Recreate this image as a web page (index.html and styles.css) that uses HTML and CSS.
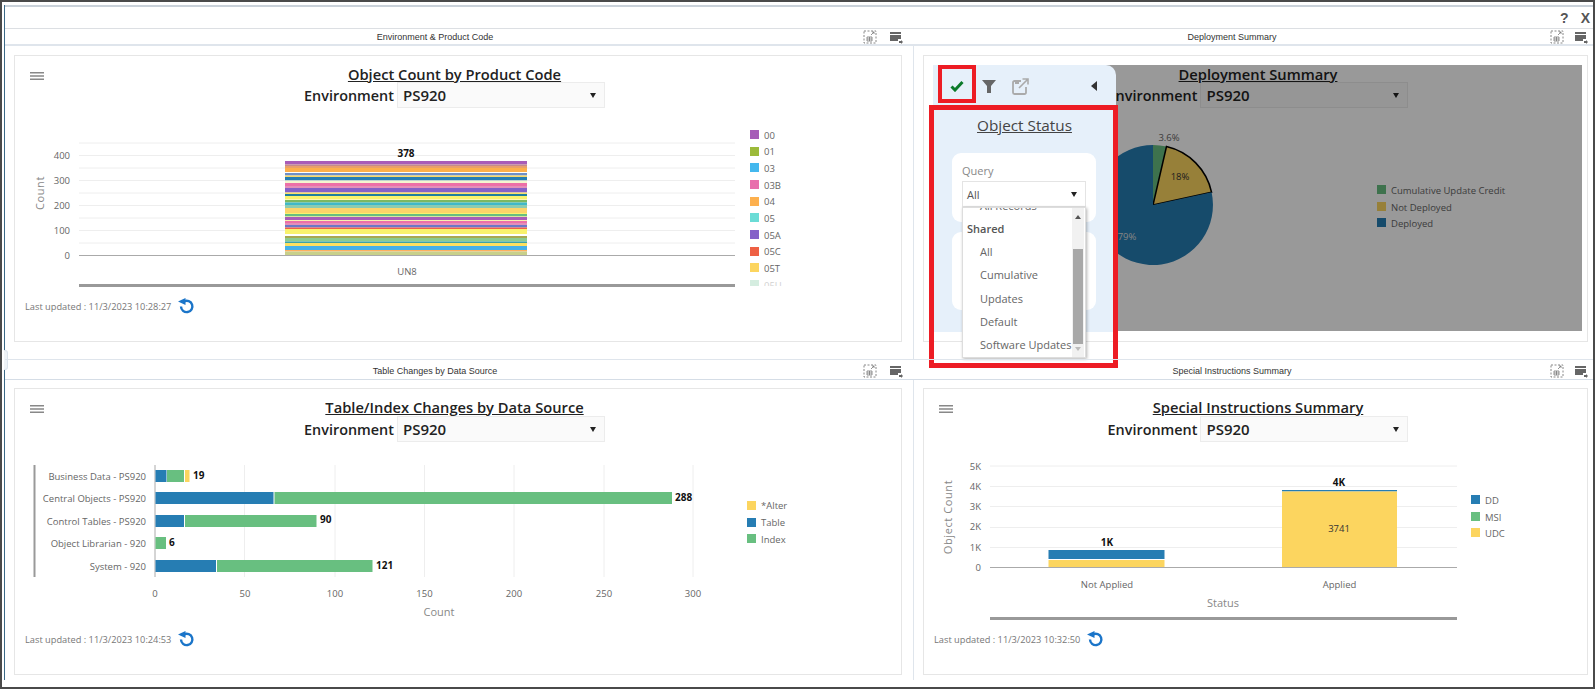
FILE: index.html
```html
<!DOCTYPE html>
<html lang="en">
<head>
<meta charset="utf-8">
<title>Dashboard</title>
<link rel="stylesheet" href="styles.css">
</head>
<body>
<div class="frame">
  <div class="inner">
    <div class="topbar"><span class="help">?</span><span class="close">X</span></div>
    <div class="splitter"></div>
    <div class="panels">

      <section class="panel panel-top col-left">
        <header class="panel-head">
          <span class="panel-name">Environment &amp; Product Code</span>
          <svg class="ic-a" width="14" height="14" viewBox="0 0 14 14"><path class="dash" d="M1 1h12v12H1z"/><path class="gridi" d="M4 7h5v4H4zM6.500 7v4M4 9h5"/><path class="gridi" d="M8 5l3-3M9 2h2v2"/></svg>
          <svg class="ic-b" width="13" height="12" viewBox="0 0 13 12"><path class="solid" d="M0 0h11v2H0zM0 3h11v4H8v2H0z"/><path class="solid" d="M9 9h2V8l2 2-2 2v-1H9z"/></svg>
        </header>
        <div class="panel-body body-left">
          <div class="card">
            <svg class="burger" width="14" height="8" viewBox="0 0 14 8"><path d="M0 0h14v1.500H0zM0 3.200h14v1.500H0zM0 6.500h14V8H0z"/></svg>
            <h2 class="title shift-left">Object Count by Product Code</h2>
            <div class="envrow shift-left"><span class="envlabel">Environment</span><div class="envsel"><span>PS920</span><i class="caret"></i></div></div>
            <svg class="chart" width="886" height="186" viewBox="15 112 886 186">
              <defs><clipPath id="legclip"><rect x="740" y="125" width="60" height="161"/></clipPath></defs>
              <g class="gl"><path d="M79 143H735M79 155.500H735M79 168H735M79 180.500H735M79 193H735M79 205.500H735M79 218H735M79 230.500H735M79 243H735"/></g>
              <text class="t end" x="70" y="159">400</text><text class="t end" x="70" y="184">300</text><text class="t end" x="70" y="209">200</text><text class="t end" x="70" y="234">100</text><text class="t end" x="70" y="259">0</text>
              <text class="axt mid" transform="translate(44 193) rotate(-90)">Count</text>
              <g>
                <rect x="285" y="161" width="242" height="3.500" fill="#a85cb8"/><rect x="285" y="164.500" width="242" height="1.500" fill="#c58a8a"/><rect x="285" y="166" width="242" height="2" fill="#e8a06a"/><rect x="285" y="168" width="242" height="4" fill="#fdaf4b"/><rect x="285" y="173" width="242" height="2.500" fill="#6f8fc8"/><rect x="285" y="175.500" width="242" height="1.500" fill="#f8d86a"/><rect x="285" y="177" width="242" height="3.500" fill="#267db3"/><rect x="285" y="180.500" width="242" height="2.500" fill="#f5f5d0"/><rect x="285" y="183" width="242" height="3" fill="#ed6fa8"/><rect x="285" y="186" width="242" height="2" fill="#e48fb8"/><rect x="285" y="188" width="242" height="4.500" fill="#8561c8"/><rect x="285" y="192.500" width="242" height="1.500" fill="#f9e06a"/><rect x="285" y="194" width="242" height="2" fill="#1d7f9f"/><rect x="285" y="196" width="242" height="3.500" fill="#f9f26d"/><rect x="285" y="200" width="242" height="2.500" fill="#7cb860"/><rect x="285" y="202.500" width="242" height="2.500" fill="#3fb8c8"/><rect x="285" y="205" width="242" height="3" fill="#8ccbb0"/><rect x="285" y="208" width="242" height="5" fill="#fcd46a"/><rect x="285" y="213" width="242" height="1" fill="#f9f26d"/><rect x="285" y="214" width="242" height="2.500" fill="#68bf80"/><rect x="285" y="216.500" width="242" height=".5" fill="#f8f080"/><rect x="285" y="217" width="242" height="3" fill="#a85cb8"/><rect x="285" y="220" width="242" height="1" fill="#f8f0b0"/><rect x="285" y="221" width="242" height="2" fill="#ed6fa8"/><rect x="285" y="223" width="242" height="2" fill="#e48fb8"/><rect x="285" y="225" width="242" height="2.500" fill="#6a78c8"/><rect x="285" y="227.500" width="242" height="1.500" fill="#f0604a"/><rect x="285" y="229" width="242" height="5" fill="#f9f26d"/><rect x="285" y="236" width="242" height="2" fill="#a8a850"/><rect x="285" y="238" width="242" height="3.500" fill="#8ccb90"/><rect x="285" y="241.500" width="242" height="1.500" fill="#3aa3a8"/><rect x="285" y="243" width="242" height="3" fill="#fde060"/><rect x="285" y="246" width="242" height="4" fill="#45b0e8"/><rect x="285" y="250" width="242" height="1.500" fill="#fdb060"/><rect x="285" y="251.500" width="242" height="3.500" fill="#c8d08a"/>
              </g>
              <path class="axis" d="M79 255.500H735"/>
              <rect class="thick" x="79" y="284" width="656" height="3"/>
              <text class="v mid" x="406" y="157">378</text>
              <text class="t mid" x="407" y="275">UN8</text>
              <g clip-path="url(#legclip)">
                <rect x="750" y="130" width="9" height="9" fill="#a65cb7"/><text class="t" x="764" y="139">00</text>
                <rect x="750" y="147" width="9" height="9" fill="#9cba3a"/><text class="t" x="764" y="155">01</text>
                <rect x="750" y="163" width="9" height="9" fill="#44b8ee"/><text class="t" x="764" y="172">03</text>
                <rect x="750" y="180" width="9" height="9" fill="#e86fac"/><text class="t" x="764" y="189">03B</text>
                <rect x="750" y="197" width="9" height="9" fill="#fdb04e"/><text class="t" x="764" y="205">04</text>
                <rect x="750" y="213" width="9" height="9" fill="#6bdcd6"/><text class="t" x="764" y="222">05</text>
                <rect x="750" y="230" width="9" height="9" fill="#8561c8"/><text class="t" x="764" y="239">05A</text>
                <rect x="750" y="247" width="9" height="9" fill="#ee6044"/><text class="t" x="764" y="255">05C</text>
                <rect x="750" y="263" width="9" height="9" fill="#fcd55f"/><text class="t" x="764" y="272">05T</text>
                <rect x="750" y="280" width="9" height="9" fill="#d5ede0"/><text class="t faint" x="764" y="289">05U</text>
              </g>
            </svg>
            <div class="updated"><span>Last updated : 11/3/2023 10:28:27</span><svg class="refresh" width="18" height="16" viewBox="0 0 18 16"><path d="M7 3.400A5.700 5.700 0 1 1 4 8.500"/><path class="head" d="M8.500 0v7L1 3.500z"/></svg></div>
          </div>
        </div>
      </section>

      <section class="panel panel-top col-right">
        <header class="panel-head">
          <span class="panel-name">Deployment Summary</span>
          <svg class="ic-a" width="14" height="14" viewBox="0 0 14 14"><path class="dash" d="M1 1h12v12H1z"/><path class="gridi" d="M4 7h5v4H4zM6.500 7v4M4 9h5"/><path class="gridi" d="M8 5l3-3M9 2h2v2"/></svg>
          <svg class="ic-b" width="13" height="12" viewBox="0 0 13 12"><path class="solid" d="M0 0h11v2H0zM0 3h11v4H8v2H0z"/><path class="solid" d="M9 9h2V8l2 2-2 2v-1H9z"/></svg>
        </header>
        <div class="panel-body body-right">
          <div class="card">
            <h2 class="title shift-right">Deployment Summary</h2>
            <div class="envrow shift-right"><span class="envlabel">Environment</span><div class="envsel"><span>PS920</span><i class="caret"></i></div></div>
            <svg class="chart" width="663" height="186" viewBox="924 112 663 186">
              <path d="M1153 205V145A60 60 0 0 1 1166.500 146.500Z" fill="#68bf80"/>
              <path d="M1153 205L1166.500 146.500A60 60 0 0 1 1211.600 192.300Z" fill="#fcd55f" stroke="#000" stroke-width="1.500"/>
              <path d="M1153 205L1211.600 192.300A60 60 0 1 1 1153 145Z" fill="#267db3"/>
              <text class="t mid" x="1169" y="141">3.6%</text>
              <text class="t mid dark" x="1180" y="180">18%</text>
              <text class="t mid lite" x="1127" y="240">79%</text>
              <rect x="1377" y="185" width="9" height="9" fill="#68bf80"/><text class="t" x="1391" y="194">Cumulative Update Credit</text>
              <rect x="1377" y="202" width="9" height="9" fill="#fcd55f"/><text class="t" x="1391" y="211">Not Deployed</text>
              <rect x="1377" y="218" width="9" height="9" fill="#267db3"/><text class="t" x="1391" y="227">Deployed</text>
            </svg>
            <div class="overlay"></div>
            <aside class="popup">
              <div class="pop-tools">
                <svg class="ic-check" width="14" height="12" viewBox="0 0 14 12"><path d="M1.500 6.500L5 10 12.500 2"/></svg>
                <svg class="ic-filter" width="14" height="13" viewBox="0 0 14 13"><path d="M0 0h14L9 6v7H5V6z"/></svg>
                <svg class="ic-ext" width="17" height="17" viewBox="0 0 17 17"><path class="ext-box" d="M9 3H2.500A1.500 1.500 0 0 0 1 4.500v10A1.500 1.500 0 0 0 2.500 16h10a1.500 1.500 0 0 0 1.500-1.500V9"/><path class="ext-arrow" d="M7 10L15.500 1.500M10.500 1H16v5.500"/><path class="ext-fill" d="M3 4h4v2H3z"/></svg>
                <i class="collapse"></i>
              </div>
              <h3 class="pop-title">Object Status</h3>
              <div class="pop-card pop-card-a">
                <div class="pop-label">Query</div>
                <div class="pop-select"><span>All</span><i class="caret"></i></div>
              </div>
              <div class="pop-card pop-card-b"></div>
              <div class="dropdown">
                <ul class="dd-list">
                  <li class="dd-item">All Records</li>
                  <li class="dd-group">Shared</li>
                  <li class="dd-item">All</li>
                  <li class="dd-item">Cumulative</li>
                  <li class="dd-item">Updates</li>
                  <li class="dd-item">Default</li>
                  <li class="dd-item">Software Updates</li>
                </ul>
                <div class="scroll"><i class="up"></i><b class="thumb"></b><i class="down"></i></div>
              </div>
            </aside>
            <div class="mark mark-check"></div>
            <div class="mark mark-drop"></div>
          </div>
        </div>
      </section>

      <section class="panel panel-low col-left">
        <header class="panel-head">
          <span class="panel-name">Table Changes by Data Source</span>
          <svg class="ic-a" width="14" height="14" viewBox="0 0 14 14"><path class="dash" d="M1 1h12v12H1z"/><path class="gridi" d="M4 7h5v4H4zM6.500 7v4M4 9h5"/><path class="gridi" d="M8 5l3-3M9 2h2v2"/></svg>
          <svg class="ic-b" width="13" height="12" viewBox="0 0 13 12"><path class="solid" d="M0 0h11v2H0zM0 3h11v4H8v2H0z"/><path class="solid" d="M9 9h2V8l2 2-2 2v-1H9z"/></svg>
        </header>
        <div class="panel-body body-left">
          <div class="card">
            <svg class="burger" width="14" height="8" viewBox="0 0 14 8"><path d="M0 0h14v1.500H0zM0 3.200h14v1.500H0zM0 6.500h14V8H0z"/></svg>
            <h2 class="title shift-left">Table/Index Changes by Data Source</h2>
            <div class="envrow shift-left"><span class="envlabel">Environment</span><div class="envsel"><span>PS920</span><i class="caret"></i></div></div>
            <svg class="chart" width="886" height="185" viewBox="15 446 886 185">
              <g class="gl"><path d="M244.500 465V577M335 465V577M424.500 465V577M514 465V577M604 465V577M693 465V577"/></g>
              <rect class="thick" x="33.500" y="465" width="2" height="112"/>
              <path class="axis" d="M155 465V577"/>
              <text class="t end" x="146" y="480">Business Data - PS920</text>
              <text class="t end" x="146" y="502">Central Objects - PS920</text>
              <text class="t end" x="146" y="525">Control Tables - PS920</text>
              <text class="t end" x="146" y="547">Object Librarian - 920</text>
              <text class="t end" x="146" y="570">System - 920</text>
              <rect x="155.500" y="470" width="11" height="12" fill="#267db3"/><rect x="167" y="470" width="17" height="12" fill="#68bf80"/><rect x="185" y="470" width="4.500" height="12" fill="#fcd55f"/>
              <rect x="155.500" y="492" width="118" height="12" fill="#267db3"/><rect x="274.500" y="492" width="397.500" height="12" fill="#68bf80"/>
              <rect x="155.500" y="515" width="28.500" height="12" fill="#267db3"/><rect x="185" y="515" width="131.500" height="12" fill="#68bf80"/>
              <rect x="155.500" y="537" width="10.500" height="12" fill="#68bf80"/>
              <rect x="155.500" y="560" width="60.500" height="12" fill="#267db3"/><rect x="217" y="560" width="155.500" height="12" fill="#68bf80"/>
              <text class="v" x="193" y="479">19</text><text class="v" x="675" y="501">288</text><text class="v" x="320" y="523">90</text><text class="v" x="169" y="546">6</text><text class="v" x="376" y="569">121</text>
              <text class="t mid" x="155" y="597">0</text><text class="t mid" x="245" y="597">50</text><text class="t mid" x="335" y="597">100</text><text class="t mid" x="424.500" y="597">150</text><text class="t mid" x="514" y="597">200</text><text class="t mid" x="604" y="597">250</text><text class="t mid" x="693" y="597">300</text>
              <text class="axt2 mid" x="439" y="616">Count</text>
              <rect x="747" y="501" width="9" height="9" fill="#fcd55f"/><text class="t" x="761" y="509">*Alter</text>
              <rect x="747" y="518" width="9" height="9" fill="#267db3"/><text class="t" x="761" y="526">Table</text>
              <rect x="747" y="534" width="9" height="9" fill="#68bf80"/><text class="t" x="761" y="543">Index</text>
            </svg>
            <div class="updated"><span>Last updated : 11/3/2023 10:24:53</span><svg class="refresh" width="18" height="16" viewBox="0 0 18 16"><path d="M7 3.400A5.700 5.700 0 1 1 4 8.500"/><path class="head" d="M8.500 0v7L1 3.500z"/></svg></div>
          </div>
        </div>
      </section>

      <section class="panel panel-low col-right">
        <header class="panel-head">
          <span class="panel-name">Special Instructions Summary</span>
          <svg class="ic-a" width="14" height="14" viewBox="0 0 14 14"><path class="dash" d="M1 1h12v12H1z"/><path class="gridi" d="M4 7h5v4H4zM6.500 7v4M4 9h5"/><path class="gridi" d="M8 5l3-3M9 2h2v2"/></svg>
          <svg class="ic-b" width="13" height="12" viewBox="0 0 13 12"><path class="solid" d="M0 0h11v2H0zM0 3h11v4H8v2H0z"/><path class="solid" d="M9 9h2V8l2 2-2 2v-1H9z"/></svg>
        </header>
        <div class="panel-body body-right">
          <div class="card">
            <svg class="burger" width="14" height="8" viewBox="0 0 14 8"><path d="M0 0h14v1.500H0zM0 3.200h14v1.500H0zM0 6.500h14V8H0z"/></svg>
            <h2 class="title shift-right">Special Instructions Summary</h2>
            <div class="envrow shift-right"><span class="envlabel">Environment</span><div class="envsel"><span>PS920</span><i class="caret"></i></div></div>
            <svg class="chart" width="663" height="185" viewBox="924 446 663 185">
              <g class="gl"><path d="M990 466H1457M990 486.500H1457M990 506.500H1457M990 527.500H1457M990 547.500H1457"/></g>
              <text class="t end" x="981" y="470">5K</text><text class="t end" x="981" y="490">4K</text><text class="t end" x="981" y="510">3K</text><text class="t end" x="981" y="530">2K</text><text class="t end" x="981" y="551">1K</text><text class="t end" x="981" y="571">0</text>
              <text class="axt mid" transform="translate(952 517) rotate(-90)">Object Count</text>
              <rect x="1048.500" y="550" width="116" height="9" fill="#267db3"/><rect x="1048.500" y="560" width="116" height="7" fill="#fcd55f"/>
              <rect x="1282" y="490" width="115" height="1.500" fill="#267db3"/><rect x="1282" y="491.500" width="115" height="75.500" fill="#fcd55f"/>
              <path class="axis" d="M990 567.500H1457"/>
              <text class="v mid" x="1107" y="546">1K</text><text class="v mid" x="1339" y="486">4K</text>
              <text class="t mid dark" x="1339" y="532">3741</text>
              <text class="t mid" x="1107" y="588">Not Applied</text><text class="t mid" x="1339.500" y="588">Applied</text>
              <text class="axt2 mid" x="1223" y="607">Status</text>
              <rect class="thick" x="990" y="617" width="467" height="3"/>
              <rect x="1471" y="495" width="9" height="9" fill="#267db3"/><text class="t" x="1485" y="504">DD</text>
              <rect x="1471" y="512" width="9" height="9" fill="#68bf80"/><text class="t" x="1485" y="521">MSI</text>
              <rect x="1471" y="528" width="9" height="9" fill="#fcd55f"/><text class="t" x="1485" y="537">UDC</text>
            </svg>
            <div class="updated"><span>Last updated : 11/3/2023 10:32:50</span><svg class="refresh" width="18" height="16" viewBox="0 0 18 16"><path d="M7 3.400A5.700 5.700 0 1 1 4 8.500"/><path class="head" d="M8.500 0v7L1 3.500z"/></svg></div>
          </div>
        </div>
      </section>

    </div>
  </div>
</div>
</body>
</html>
```
FILE: styles.css
```css
* { box-sizing: border-box; }
html, body { margin: 0; padding: 0; background: #fff; overflow: hidden; }
body { font-family: "Open Sans", "Liberation Sans", sans-serif; }

.frame {
  width: 1595px;
  height: 689px;
  border: 2px solid #4a4a4a;
  padding: 3px 0 7px 2px;
  background: #fff;
}
.inner {
  position: relative;
  height: 100%;
  display: flex;
  flex-direction: column;
  border-left: 1px solid #3c6a88;
}
.topbar {
  height: 24px;
  flex: none;
  border-top: 2px solid #c9d1d9;
  border-bottom: 1px solid #dcdfe3;
  display: flex;
  justify-content: flex-end;
  align-items: center;
  gap: 12px;
  padding-right: 3px;
  font-family: "Liberation Sans", sans-serif;
  font-weight: 700;
  font-size: 14px;
  color: #555;
}
.splitter {
  position: absolute;
  left: -1px;
  top: 345px;
  width: 4px;
  height: 20px;
  background: #eef2f6;
  border: 1px solid #dbe3ec;
  border-left: 0;
  border-radius: 0 3px 3px 0;
}
.panels {
  flex: 1;
  display: grid;
  grid-template-columns: 908px 680px;
  grid-template-rows: 330px 1fr;
}
.panel { display: flex; flex-direction: column; min-height: 0; }
.panel-head {
  position: relative;
  flex: none;
  display: flex;
  align-items: center;
  justify-content: center;
}
.panel-top .panel-head { height: 17px; border-bottom: 2px solid #dfe5ec; }
.panel-low .panel-head { height: 21px; border-top: 1px solid #dfe5ec; border-bottom: 1px solid #d5dde6; padding-top: 3px; }
.col-left .panel-head { padding-right: 48px; }
.col-right .panel-head { padding-right: 42px; }
.panel-name {
  font-family: "Liberation Sans", sans-serif;
  font-size: 9px;
  color: #333;
}
.ic-a, .ic-b { position: absolute; }
.ic-a { top: 1px; }
.ic-b { top: 3px; }
.panel-low .ic-a { top: 4px; }
.panel-low .ic-b { top: 6px; }
.col-left .ic-a { right: 36px; }
.col-left .ic-b { right: 10px; }
.col-right .ic-a { right: 29px; }
.col-right .ic-b { right: 5px; }
.dash { fill: none; stroke: #888; stroke-width: 1; stroke-dasharray: 2 1.500; }
.gridi { fill: none; stroke: #777; stroke-width: .8; }
.solid { fill: #666; }

.panel-body { flex: 1; display: flex; min-height: 0; }
.panel-top .panel-body { padding-top: 9px; padding-bottom: 17px; }
.panel-low .panel-body { padding-top: 8px; padding-bottom: 5px; }
.body-left { padding-left: 9px; padding-right: 11px; }
.body-right { padding-left: 9px; padding-right: 5px; border-left: 1px solid #dfe5ec; }

.card {
  position: relative;
  flex: 1;
  min-width: 0;
  border: 1px solid #e6e6e6;
  background: #fff;
  padding-top: 10px;
}

.burger { position: absolute; left: 15px; top: 16px; fill: #888; }
.title {
  position: relative;
  margin: 0;
  font-size: 14.700px;
  line-height: 16px;
  font-weight: 600;
  color: #222;
  text-align: center;
  text-decoration: underline;
}
.envrow {
  margin-top: 1px;
  height: 26px;
  margin-bottom: 4px;
  display: flex;
  justify-content: center;
  align-items: center;
  gap: 3px;
}
.panel-top .envrow { margin-top: 0; }
.shift-left { padding-right: 7px; }
.shift-right { padding-left: 5px; }
.envlabel { font-size: 14.400px; font-weight: 600; color: #222; }
.envsel {
  width: 208px;
  height: 26px;
  display: flex;
  align-items: center;
  justify-content: space-between;
  padding: 0 8px 0 5px;
  background: #fafafa;
  border: 1px solid #ececec;
  font-size: 15px;
  font-weight: 600;
  color: #222;
}
.caret {
  width: 0;
  height: 0;
  border: solid transparent;
  border-width: 5px 3.500px 0;
  border-top-color: #222;
}
.chart { display: block; }
.chart text { font-family: "Open Sans", "Liberation Sans", sans-serif; }
.t { font-size: 9.500px; fill: #666; }
.end { text-anchor: end; }
.mid { text-anchor: middle; }
.v { font-size: 10px; font-weight: 700; fill: #111; }
.axt { font-size: 11px; fill: #888; letter-spacing: .6px; }
.axt2 { font-size: 11px; fill: #888; }
.faint { opacity: .3; }
.dark { fill: #333; }
.lite { fill: #ddd; }
.gl path { fill: none; stroke: #eeeeee; stroke-width: 1; }
.axis { fill: none; stroke: #aaa; stroke-width: 1; }
.thick { fill: #999; }

.updated {
  height: 16px;
  display: flex;
  align-items: center;
  gap: 6px;
  padding-left: 10px;
  font-size: 9.250px;
  color: #777;
}
.refresh { fill: none; }
.refresh path { stroke: #1b75c9; stroke-width: 2.400; fill: none; }
.refresh .head { fill: #1b75c9; stroke: none; }

.overlay {
  position: absolute;
  left: 9px;
  top: 9px;
  right: 5px;
  bottom: 10px;
  background: rgba(0, 0, 0, .4);
}
.popup {
  position: absolute;
  left: 9px;
  top: 9px;
  width: 183px;
  height: 267px;
  background: #e6f0fa;
  border-radius: 0 10px 4px 0;
}
.pop-tools {
  height: 40px;
  display: flex;
  align-items: center;
  padding: 2px 19px 0 17px;
}
.ic-check path { fill: none; stroke: #0b7a2a; stroke-width: 3; }
.ic-filter { margin-left: 18px; fill: #666; }
.ic-ext { margin-left: 16px; }
.ext-box { fill: none; stroke: #aaa; stroke-width: 1.800; }
.ext-arrow { fill: none; stroke: #aaa; stroke-width: 1.600; }
.ext-fill { fill: #aaa; }
.collapse {
  margin-left: auto;
  width: 0;
  height: 0;
  border: solid transparent;
  border-width: 5px 6px 5px 0;
  border-right-color: #333;
}
.pop-title {
  margin: 8px 0 0;
  font-size: 15.300px;
  line-height: 24px;
  font-weight: 400;
  color: #444;
  text-align: center;
  text-decoration: underline;
}
.pop-card {
  margin-left: 19px;
  width: 144px;
  background: #fff;
  border-radius: 9px;
}
.pop-card-a { margin-top: 16px; height: 69px; padding: 10px 10px 0; }
.pop-card-b { margin-top: 10px; height: 78px; }
.pop-label { font-size: 11px; line-height: 16px; color: #888; }
.pop-select {
  margin-top: 2px;
  height: 26px;
  display: flex;
  align-items: center;
  justify-content: space-between;
  padding: 0 8px 0 4px;
  background: #fff;
  border: 1px solid #e4e4e4;
  font-size: 11px;
  color: #555;
}
.dropdown {
  position: absolute;
  left: 29px;
  top: 142px;
  width: 124px;
  height: 151px;
  background: #fff;
  border: 1px solid #ddd;
  box-shadow: 1px 1px 3px rgba(0, 0, 0, .3);
  overflow: hidden;
}
.dd-list {
  list-style: none;
  margin: -14.500px 0 0;
  padding: 0;
  font-size: 11px;
  color: #666;
}
.dd-item { height: 23.300px; line-height: 23.300px; padding-left: 17px; white-space: nowrap; }
.dd-group { height: 23.300px; line-height: 23.300px; padding-left: 4px; font-weight: 600; color: #555; }
.scroll {
  position: absolute;
  right: 1px;
  top: 0;
  bottom: 0;
  width: 12px;
  background: #f1f1f1;
}
.thumb {
  position: absolute;
  left: 1px;
  right: 1px;
  top: 41px;
  height: 95px;
  background: #a8a8a8;
}
.up, .down {
  position: absolute;
  left: 3px;
  width: 0;
  height: 0;
  border: solid transparent;
  border-width: 0 3px 4px;
}
.up { top: 7px; border-bottom-color: #555; }
.down { bottom: 6px; border-width: 4px 3px 0; border-top-color: #bbb; }

.mark { position: absolute; border-style: solid; border-color: #ed1c24; }
.mark-check { left: 14px; top: 9px; width: 38px; height: 38px; border-width: 4px; }
.mark-drop { left: 5px; top: 49px; width: 189px; height: 263px; border-width: 5px; }
```
